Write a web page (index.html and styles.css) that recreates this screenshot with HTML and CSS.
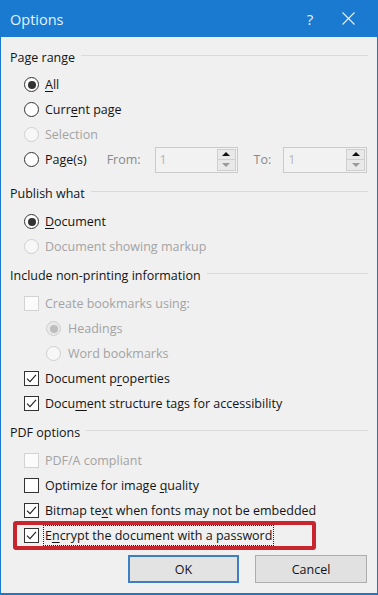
FILE: index.html
```html
<!DOCTYPE html>
<html>
<head>
<meta charset="utf-8">
<title>Options</title>
<link rel="stylesheet" href="styles.css">
</head>
<body>
<div class="window">
  <div class="titlebar">
    <span class="title">Options</span>
    <span class="help">?</span>
    <span class="close">
      <svg width="13" height="13" viewBox="0 0 13 13"><path d="M0.5 0.5 L12.5 12.5 M12.5 0.5 L0.5 12.5" stroke="#e4f2ff" stroke-width="1.1" fill="none"/></svg>
    </span>
  </div>
  <div class="content">
    <section class="group first">
      <div class="heading"><span>Page range</span><i class="rule"></i></div>
      <div class="row"><span class="radio on"></span><span class="label"><u>A</u>ll</span></div>
      <div class="row"><span class="radio"></span><span class="label">Curr<u>e</u>nt page</span></div>
      <div class="row off"><span class="radio"></span><span class="label">Selection</span></div>
      <div class="row pages">
        <span class="radio"></span><span class="label">Pa<u>g</u>e(s)</span>
        <span class="field-label from">From:</span>
        <span class="spin spin-from"><span class="spin-text">1</span><span class="spin-btns"><span class="sb up"><i></i></span><span class="sb down"><i></i></span></span></span>
        <span class="field-label to">To:</span>
        <span class="spin spin-to"><span class="spin-text">1</span><span class="spin-btns"><span class="sb up"><i></i></span><span class="sb down"><i></i></span></span></span>
      </div>
    </section>
    <section class="group">
      <div class="heading"><span>Publish what</span><i class="rule"></i></div>
      <div class="row"><span class="radio on"></span><span class="label"><u>D</u>ocument</span></div>
      <div class="row off"><span class="radio"></span><span class="label">Document showing markup</span></div>
    </section>
    <section class="group">
      <div class="heading"><span>Include non-printing information</span><i class="rule"></i></div>
      <div class="row off"><span class="check"></span><span class="label">Create bookmarks using:</span></div>
      <div class="row off sub"><span class="radio on"></span><span class="label">Headings</span></div>
      <div class="row off sub"><span class="radio"></span><span class="label">Word bookmarks</span></div>
      <div class="row"><span class="check on"><svg width="15" height="15" viewBox="0 0 15 15"><path d="M3 7.6 L6 10.6 L12 3.8" stroke="#222" stroke-width="1.15" fill="none"/></svg></span><span class="label">Document p<u>r</u>operties</span></div>
      <div class="row"><span class="check on"><svg width="15" height="15" viewBox="0 0 15 15"><path d="M3 7.6 L6 10.6 L12 3.8" stroke="#222" stroke-width="1.15" fill="none"/></svg></span><span class="label">Docu<u>m</u>ent structure tags for accessibility</span></div>
    </section>
    <section class="group">
      <div class="heading"><span>PDF options</span><i class="rule"></i></div>
      <div class="row off"><span class="check"></span><span class="label">PDF/A compliant</span></div>
      <div class="row"><span class="check"></span><span class="label">Optimize for image <u>q</u>uality</span></div>
      <div class="row"><span class="check on"><svg width="15" height="15" viewBox="0 0 15 15"><path d="M3 7.6 L6 10.6 L12 3.8" stroke="#222" stroke-width="1.15" fill="none"/></svg></span><span class="label">Bitmap te<u>x</u>t when fonts may not be embedded</span></div>
      <div class="row highlight"><span class="check on"><svg width="15" height="15" viewBox="0 0 15 15"><path d="M3 7.6 L6 10.6 L12 3.8" stroke="#222" stroke-width="1.15" fill="none"/></svg></span><span class="label focus">E<u>n</u>crypt the document with a password</span></div>
    </section>
    <div class="buttons">
      <button class="btn default">OK</button>
      <button class="btn">Cancel</button>
    </div>
  </div>
</div>
</body>
</html>
```

FILE: styles.css
```css
* { box-sizing: border-box; }
html, body { margin: 0; padding: 0; }
body {
  width: 378px;
  height: 595px;
  font-family: "Open Sans", "Noto Sans", sans-serif;
  font-size: 12.5px;
  color: #141414;
  background: #f0f0f0;
}
.window {
  width: 378px;
  height: 595px;
  border-left: 1px solid #1b78cc;
  border-right: 1px solid #1b78cc;
  border-bottom: 2px solid #1b78cc;
  background: #f0f0f0;
  display: flex;
  flex-direction: column;
}
.titlebar {
  height: 37px;
  flex: none;
  background: #1a7ad0;
  display: flex;
  align-items: center;
  padding-left: 10px;
  padding-right: 7px;
  margin: 0 -1px;
  color: #e2f2ff;
}
.title {
  flex: 1;
  font-size: 14.5px;
  padding-top: 1px;
}
.help {
  width: 30px;
  text-align: center;
  font-size: 15px;
  padding-top: 1px;
}
.close {
  width: 46px;
  display: flex;
  justify-content: center;
  align-items: center;
}
.close svg { display: block; }
.content {
  flex: 1;
  padding: 0 9px;
  display: flex;
  flex-direction: column;
}
.group { display: flex; flex-direction: column; margin-top: 6px; }
.group.first { margin-top: 10px; }
.heading {
  height: 20px;
  display: flex;
  align-items: center;
  margin-bottom: 6px;
  color: #141414;
}
.group.first .heading { margin-bottom: 5px; }
.heading span { white-space: nowrap; }
.rule {
  flex: 1;
  height: 1px;
  background: #dadada;
  margin-left: 6px;
  margin-top: -3px;
}
.row {
  height: 25px;
  display: flex;
  align-items: center;
  padding-left: 14px;
  gap: 6px;
  position: relative;
  white-space: nowrap;
}
.row.sub { padding-left: 36px; gap: 7px; }
.row.off { color: #a3a3a3; }
.label u { text-decoration-thickness: 1px; text-underline-offset: 2px; }
.radio {
  width: 15px;
  height: 15px;
  flex: none;
  border-radius: 50%;
  border: 1px solid #333;
  background: #fff;
  display: flex;
  align-items: center;
  justify-content: center;
}
.radio.on::after {
  content: "";
  width: 8px;
  height: 8px;
  border-radius: 50%;
  background: #333;
}
.row.off .radio { border-color: #cfcfcf; background: #f7f7f7; }
.row.off .radio.on { background: #e8e8e8; }
.row.off .radio.on::after { background: #bdbdbd; }
.check {
  width: 15px;
  height: 15px;
  flex: none;
  border: 1px solid #333;
  background: #fff;
  position: relative;
}
.check svg { position: absolute; left: -1px; top: -1px; }
.row.off .check { border-color: #d3d3d3; background: #fbfbfb; }
.pages { margin-bottom: 5px; }
.field-label { color: #8a8a8a; }
.field-label.from { margin-left: 14px; }
.field-label.to { margin-left: 10px; }
.spin {
  width: 83px;
  height: 26px;
  border: 1px solid #cacaca;
  background: #f2f2f2;
  display: flex;
  align-items: center;
  justify-content: space-between;
  padding: 1px 1px 1px 4px;
  flex: none;
}
.spin-from { margin-left: 8px; }
.spin-to { margin-left: 6px; width: 84px; }
.spin-text { color: #b5b5b5; }
.spin-btns {
  width: 19px;
  height: 100%;
  display: flex;
  flex-direction: column;
}
.sb {
  flex: 1;
  border: 1px solid #cfcfcf;
  background: #e9e9e9;
  display: flex;
  align-items: center;
  justify-content: center;
}
.sb + .sb { border-top: none; }
.sb i {
  width: 0;
  height: 0;
  border-left: 4px solid transparent;
  border-right: 4px solid transparent;
}
.sb.up i { border-bottom: 4px solid #111; }
.sb.down i { border-top: 4px solid #9a9a9a; }
.focus {
  outline: 1px dotted #222;
  outline-offset: 0;
  line-height: 19px;
  height: 19px;
  padding: 0 1px;
  margin-left: -1px;
}
.highlight::after {
  content: "";
  position: absolute;
  left: 3px;
  right: 52px;
  top: -2px;
  bottom: -2px;
  border: 4px solid #c9252f;
  border-radius: 3px;
  pointer-events: none;
}
.buttons {
  display: flex;
  justify-content: flex-end;
  gap: 16px;
  margin-top: 7px;
  padding-right: 1px;
}
.btn {
  width: 112px;
  height: 28px;
  font-family: "Open Sans", "Noto Sans", sans-serif;
  font-size: 12.5px;
  color: #141414;
  background: #e1e1e1;
  border: 1px solid #adadad;
  padding: 0;
}
.btn.default {
  width: 111px;
  border: 2px solid #3d7fc1;
  background: #e3e3e3;
}
```
